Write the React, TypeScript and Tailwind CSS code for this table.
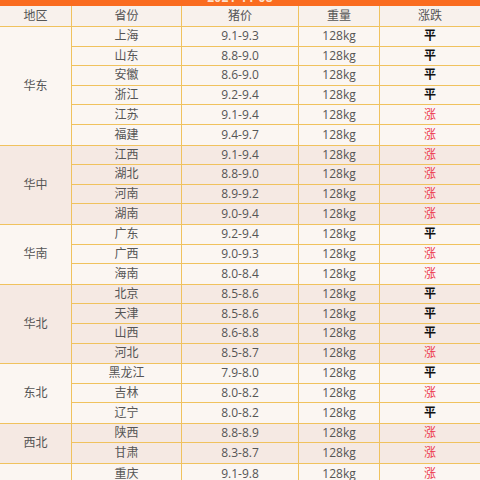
import React from "react";

type Row = [string, string, boolean];
const groups: { region: string; rows: Row[] }[] = [
  { region: "华东", rows: [["上海", "9.1-9.3", false], ["山东", "8.8-9.0", false], ["安徽", "8.6-9.0", false], ["浙江", "9.2-9.4", false], ["江苏", "9.1-9.4", true], ["福建", "9.4-9.7", true]] },
  { region: "华中", rows: [["江西", "9.1-9.4", true], ["湖北", "8.8-9.0", true], ["河南", "8.9-9.2", true], ["湖南", "9.0-9.4", true]] },
  { region: "华南", rows: [["广东", "9.2-9.4", false], ["广西", "9.0-9.3", true], ["海南", "8.0-8.4", true]] },
  { region: "华北", rows: [["北京", "8.5-8.6", false], ["天津", "8.5-8.6", false], ["山西", "8.6-8.8", false], ["河北", "8.5-8.7", true]] },
  { region: "东北", rows: [["黑龙江", "7.9-8.0", false], ["吉林", "8.0-8.2", true], ["辽宁", "8.0-8.2", false]] },
  { region: "西北", rows: [["陕西", "8.8-8.9", true], ["甘肃", "8.3-8.7", true]] },
  { region: "", rows: [["重庆", "9.1-9.8", true]] },
];

const font = { fontFamily: '"Open Sans", "Noto Sans CJK SC", sans-serif' };

export default function App() {
  return (
    <div className="w-[480px] h-[480px] overflow-hidden bg-[#fbf6f2] text-[12px] text-[#555]" style={font}>
      <div className="h-[6px] bg-[#fa6c20] overflow-hidden flex justify-center">
        <div className="-mt-[9px] text-[12px] leading-[14px] font-bold text-[#fde0cc] tracking-wide">2021-11-08</div>
      </div>
      <div className="flex h-[21px] bg-[#f8f1ec] border-b border-[#f0c25e]">
        <div className="w-[72px] border-r border-[#f0c25e] flex items-center justify-center">地区</div>
        <div className="w-[110px] border-r border-[#f0c25e] flex items-center justify-center">省份</div>
        <div className="w-[117px] border-r border-[#f0c25e] flex items-center justify-center">猪价</div>
        <div className="w-[81px] border-r border-[#f0c25e] flex items-center justify-center">重量</div>
        <div className="flex-1 flex items-center justify-center">涨跌</div>
      </div>
      {groups.map((g, gi) => (
        <div key={gi} className={`flex border-b border-[#f0c25e] ${gi % 2 === 1 ? "bg-[#f5e9e3]" : "bg-[#fbf6f2]"}`}>
          <div className="w-[72px] shrink-0 border-r border-[#f0c25e] flex items-center justify-center">{g.region}</div>
          <div className="flex-1 flex flex-col">
            {g.rows.map((r, ri) => (
              <div key={ri} className={`flex h-[19.6px] ${ri < g.rows.length - 1 ? "border-b border-[#f0c25e]" : ""}`}>
                <div className="w-[110px] border-r border-[#f0c25e] flex items-center justify-center">{r[0]}</div>
                <div className="w-[117px] border-r border-[#f0c25e] flex items-center justify-center">{r[1]}</div>
                <div className="w-[81px] border-r border-[#f0c25e] flex items-center justify-center">128kg</div>
                <div className={`flex-1 flex items-center justify-center ${r[2] ? "text-[#ec3a4c]" : "text-[#111] font-bold"}`}>{r[2] ? "涨" : "平"}</div>
              </div>
            ))}
          </div>
        </div>
      ))}
    </div>
  );
}
